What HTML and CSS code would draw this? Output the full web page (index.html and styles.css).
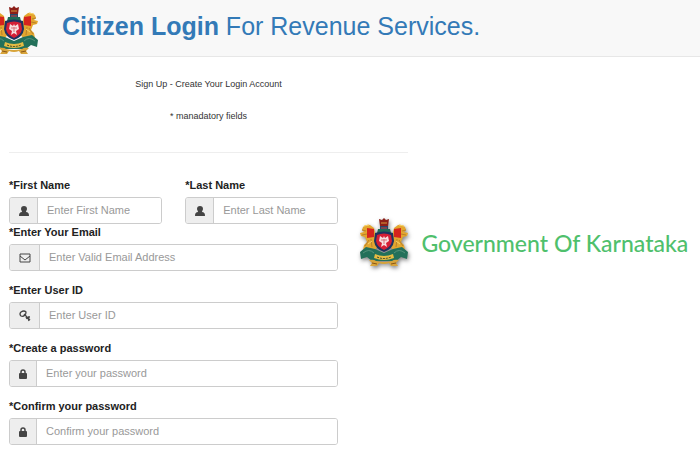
FILE: index.html
```html
<!DOCTYPE html>
<html lang="en">
<head>
  <meta charset="UTF-8">
  <meta name="viewport" content="width=device-width, initial-scale=1.0">
  <title>Citizen Login For Revenue Services</title>
  <link rel="stylesheet" href="styles.css">
</head>
<body>
  <!-- shared icons -->
  <svg class="sprite" aria-hidden="true">
    <symbol id="emblem" viewBox="0 0 50 50">
      <!-- lions -->
      <g id="lion">
        <path d="M4 9q3-3 7-2l4 3 2 8 2 10-3 4H4l1-5 3-3-2-5-4-1-1-3 4-1-2-2z" fill="#e3a62f"/>
        <path d="M8 10l7 1v8l-7 1z" fill="#d6231d"/>
        <path d="M3 12l4 1M3 17l5-1M6 28l4-6M12 21l1 8" stroke="#b9812a" fill="none"/>
        <path d="M5 8l5-1M9 26l4-3" stroke="#f8d36b" fill="none"/>
      </g>
      <use href="#lion" transform="translate(50 0) scale(-1 1)"/>
      <!-- crown and capital -->
      <path d="M20 1l3 1 2-2 2 2 3-1-1 7h-8z" fill="#8c1f18"/>
      <path d="M22 5h6" stroke="#d99a3a"/>
      <path d="M21 8h8v4h-8z" fill="#28466b"/>
      <path d="M19 11h12l1 4H18z" fill="#1f6a56"/>
      <path d="M22 10h6" stroke="#c9473b"/>
      <!-- shield -->
      <path d="M16 15q9-3 18 0l1 8q-1 8-10 11-9-3-10-11z" fill="#1d3360"/>
      <path d="M18 17q7-3 14 0l1 6q-1 6-8 9-7-3-8-9z" fill="#d41f36"/>
      <path d="M21 18l3 2 1-2 1 2 3-2 1 5-3 2 1 4-3-2-3 2 1-4-3-2z" fill="#f6dfe0"/>
      <path d="M25 21v5M22 22h6" stroke="#d8707a"/>
      <!-- base -->
      <path d="M1 34l6-5 9 2 9 4 9-4 9-2 6 5-1 7-6-2-5 4H13l-5-4-6 2z" fill="#23705a"/>
      <path d="M4 35q6-5 11 0M46 35q-6-5-11 0" stroke="#55927b" fill="none"/>
      <path d="M16 36q9 4 18 0l1 4q-10 4-20 0z" fill="#e6bc43"/>
      <path d="M18 39q7 3 14 0" stroke="#3b4a2b" stroke-dasharray="2 1" fill="none"/>
      <path d="M10 42q5-1 7 1 8 2 16 0 2-2 7-1l-3 3 2 3h-7l-2-3q-5 2-10 0l-2 3h-7l2-3z" fill="#d8a43a"/>
      <path d="M13 45l5 1M32 46l5-1" stroke="#8a5716"/>
    </symbol>
    <symbol id="icon-user" viewBox="0 0 12 12">
      <path d="M6 1c2 0 3 1 3 3 0 1-1 2-1 3 2 0 3 1 3 4H1c0-3 1-4 3-4 0-1-1-2-1-3 0-2 1-3 3-3z"/>
    </symbol>
    <symbol id="icon-mail" viewBox="0 0 12 12">
      <path d="M1 2h10v8H1zM1 4l5 4 5-4" fill="none" stroke="currentColor"/>
    </symbol>
    <symbol id="icon-key" viewBox="0 0 12 12">
      <path d="M2 6Q0 4 2 2q3-2 5 0 0 2-1 3-2 2-4 1z" fill="none" stroke="currentColor" stroke-width="1.300"/>
      <path d="M5 4l6 6M7 7l1 2M9 8l1 3M9 7h2" fill="none" stroke="currentColor" stroke-width="1.300"/>
    </symbol>
    <symbol id="icon-lock" viewBox="0 0 12 12">
      <path d="M4 6V4a2 2 0 0 1 4 0v2" fill="none" stroke="currentColor" stroke-width="1.500"/>
      <rect x="2" y="5" width="8" height="6" rx="1"/>
    </symbol>
  </svg>

  <header class="site-header">
    <svg class="emblem" role="img" aria-label="Karnataka emblem"><use href="#emblem"/></svg>
    <h1><strong>Citizen Login</strong> For Revenue Services.</h1>
  </header>

  <main class="page">
    <div class="intro">
      <p>Sign Up - Create Your Login Account</p>
      <p>* manadatory fields</p>
    </div>

    <div class="signup">
      <form class="signup-form">
        <div class="name-row">
          <div class="form-group">
            <label for="first_name">*First Name</label>
            <div class="input-group">
              <span class="addon"><svg class="icon"><use href="#icon-user"/></svg></span>
              <input type="text" id="first_name" name="first_name" placeholder="Enter First Name">
            </div>
          </div>
          <div class="form-group">
            <label for="last_name">*Last Name</label>
            <div class="input-group">
              <span class="addon"><svg class="icon"><use href="#icon-user"/></svg></span>
              <input type="text" id="last_name" name="last_name" placeholder="Enter Last Name">
            </div>
          </div>
        </div>
        <div class="form-group">
          <label for="email">*Enter Your Email</label>
          <div class="input-group">
            <span class="addon addon-wide"><svg class="icon"><use href="#icon-mail"/></svg></span>
            <input type="email" id="email" name="email" placeholder="Enter Valid Email Address">
          </div>
        </div>
        <div class="form-group">
          <label for="user_id">*Enter User ID</label>
          <div class="input-group">
            <span class="addon addon-wide"><svg class="icon"><use href="#icon-key"/></svg></span>
            <input type="text" id="user_id" name="user_id" placeholder="Enter User ID">
          </div>
        </div>
        <div class="form-group">
          <label for="password">*Create a password</label>
          <div class="input-group">
            <span class="addon addon-narrow"><svg class="icon"><use href="#icon-lock"/></svg></span>
            <input type="password" id="password" name="password" placeholder="Enter your password">
          </div>
        </div>
        <div class="form-group">
          <label for="confirm_password">*Confirm your password</label>
          <div class="input-group">
            <span class="addon addon-narrow"><svg class="icon"><use href="#icon-lock"/></svg></span>
            <input type="password" id="confirm_password" name="confirm_password" placeholder="Confirm your password">
          </div>
        </div>
      </form>

      <div class="brand">
        <svg class="emblem" role="img" aria-label="Karnataka emblem"><use href="#emblem"/></svg>
        <span class="brand-name">Government Of Karnataka</span>
      </div>
    </div>
  </main>
</body>
</html>
```
FILE: styles.css
```css
* {
  box-sizing: border-box;
}
body {
  margin: 0;
  background: #fff;
  color: #333;
  font-family: "Liberation Sans", Arial, sans-serif;
  font-size: 11px;
  line-height: 15px;
}
.sprite {
  display: none;
}
.emblem {
  flex: none;
  width: 50px;
  height: 50px;
}
.site-header {
  display: flex;
  align-items: flex-end;
  gap: 23px;
  height: 57px;
  overflow: hidden;
  background: #f8f8f8;
  border-bottom: 1px solid #e7e7e7;
}
.site-header .emblem {
  margin-left: -11px;
}
.site-header h1 {
  margin: 0 0 15px;
  font-size: 25px;
  line-height: 30px;
  font-weight: normal;
  color: #337ab7;
  white-space: nowrap;
}
.page {
  padding: 20px 9px 0;
}
.intro {
  width: 58.5%;
  padding-bottom: 28px;
  border-bottom: 1px solid #eee;
  text-align: center;
  font-size: 9px;
}
.intro p {
  margin: 0 0 17px;
}
.intro p:last-child {
  margin-bottom: 0;
}
.signup {
  display: flex;
  align-items: flex-start;
  gap: 21px;
  padding-top: 25px;
}
.signup-form {
  flex: 0 0 auto;
  width: 48.3%;
}
.name-row {
  display: grid;
  grid-template-columns: repeat(2, minmax(0, 1fr));
  gap: 23px;
  margin-bottom: 1px;
}
.form-group {
  margin-bottom: 12px;
}
.name-row .form-group {
  margin-bottom: 0;
}
label {
  display: block;
  margin-bottom: 4px;
  color: #222;
  font-weight: bold;
}
.input-group {
  display: flex;
  height: 27px;
  border: 1px solid #ccc;
  border-radius: 3px;
  overflow: hidden;
}
.addon {
  display: flex;
  align-items: center;
  justify-content: center;
  flex: none;
  width: 28px;
  background: #eee;
  border-right: 1px solid #ccc;
  color: #444;
}
.addon-wide {
  width: 30px;
}
.addon-narrow {
  width: 27px;
}
.icon {
  width: 12px;
  height: 12px;
  fill: currentColor;
}
input {
  flex: 1;
  min-width: 0;
  padding: 0 9px 1px;
  border: 0;
  outline: 0;
  background: #fff;
  color: #555;
  font-family: inherit;
  font-size: 11px;
}
input::placeholder {
  color: #999;
}
.brand {
  display: flex;
  align-items: center;
  gap: 12px;
  padding-top: 40px;
}
.brand .emblem {
  filter: drop-shadow(1px 2px 2px rgba(0, 0, 0, 0.5));
}
.brand-name {
  font-family: Lato, "Liberation Sans", sans-serif;
  font-size: 23px;
  line-height: 26px;
  font-weight: 500;
  color: #4fc06c;
  white-space: nowrap;
}
```
